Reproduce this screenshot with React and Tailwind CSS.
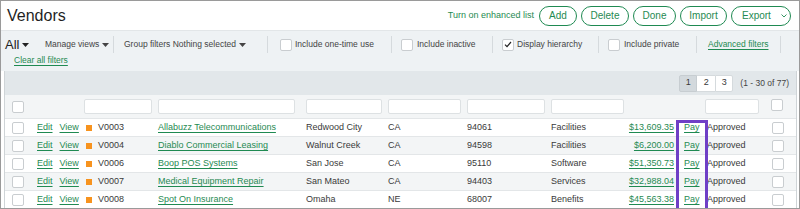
const rows = [
  { code: 'V0003', name: 'Allabuzz Telecommunications', city: 'Redwood City', state: 'CA', zip: '94061', cat: 'Facilities', amount: '$13,609.35' },
  { code: 'V0004', name: 'Diablo Commercial Leasing', city: 'Walnut Creek', state: 'CA', zip: '94598', cat: 'Facilities', amount: '$6,200.00' },
  { code: 'V0006', name: 'Boop POS Systems', city: 'San Jose', state: 'CA', zip: '95110', cat: 'Software', amount: '$51,350.73' },
  { code: 'V0007', name: 'Medical Equipment Repair', city: 'San Mateo', state: 'CA', zip: '94403', cat: 'Services', amount: '$32,988.04' },
  { code: 'V0008', name: 'Spot On Insurance', city: 'Omaha', state: 'NE', zip: '68007', cat: 'Benefits', amount: '$45,563.38' },
];

function Caret() {
  return (
    <svg width="7" height="4" viewBox="0 0 7 4" className="ml-[3px] inline-block">
      <path d="M0 0h7L3.5 4z" fill="currentColor" />
    </svg>
  );
}

function Box({ checked }) {
  return (
    <span className="inline-flex items-center justify-center w-[12px] h-[12px] bg-white border border-[#c9cdd0] rounded-[2px] shrink-0">
      {checked && (
        <svg width="8" height="7" viewBox="0 0 8 7">
          <path d="M1 3.6l2 2L7 1" fill="none" stroke="#222" strokeWidth="1.2" />
        </svg>
      )}
    </span>
  );
}

function Pill({ children, w }) {
  return (
    <button className={`${w} h-[20px] rounded-full border-[1.5px] border-[#1f8a52] text-[#1f8a52] text-[10px] flex items-center justify-center bg-white`}>
      {children}
    </button>
  );
}

function Field({ w }) {
  return <div className={`${w} h-[15px] bg-white border border-[#dde1e3] rounded-[2px]`} />;
}

export default function App() {
  return (
    <div className="relative w-[800px] h-[209px] overflow-hidden border border-[#9a9a9a] bg-white font-['Liberation_Sans',Arial,sans-serif] text-[#3a3a3a]">
      {/* title bar */}
      <div className="h-[29px] flex items-center justify-between pl-[6px] pr-[8px] bg-white">
        <div className="text-[16px] text-[#1f1f1f]">Vendors</div>
        <div className="flex items-center gap-[4px]">
          <span className="text-[9px] text-[#1f8a52] mr-[1px]">Turn on enhanced list</span>
          <Pill w="w-[38px]">Add</Pill>
          <Pill w="w-[48px]">Delete</Pill>
          <Pill w="w-[43px]">Done</Pill>
          <Pill w="w-[47px]">Import</Pill>
          <button className="w-[60px] h-[20px] rounded-full border-[1.5px] border-[#1f8a52] text-[#1f8a52] text-[10px] flex items-center pl-[10px] bg-white">
            Export
            <svg width="6" height="4" viewBox="0 0 6 4" className="ml-[10px]">
              <path d="M0.5 0.5l2.5 2.5 2.5-2.5" fill="none" stroke="#1f8a52" strokeWidth="0.9" />
            </svg>
          </button>
        </div>
      </div>

      {/* filters */}
      <div className="h-[41px] bg-[#eef2f4] border-t border-[#e2e6e8] pt-[5px]">
        <div className="flex items-center h-[17px] text-[8.5px] text-[#444]">
          <div className="w-[39px] pl-[4px] text-[13px] text-[#222] flex items-center">All<Caret /></div>
          <div className="w-[74px] h-[17px] pl-[5px] border-r border-[#d5dadd] flex items-center">Manage views<Caret /></div>
          <div className="w-[154px] h-[17px] pl-[10px] border-r border-[#d5dadd] flex items-center">Group filters Nothing selected<Caret /></div>
          <div className="w-[124px] h-[17px] pl-[12px] border-r border-[#d5dadd] flex items-center gap-[3px]"><Box />Include one-time use</div>
          <div className="w-[101px] h-[17px] pl-[9px] border-r border-[#d5dadd] flex items-center gap-[4px]"><Box />Include inactive</div>
          <div className="w-[106px] h-[17px] pl-[9px] border-r border-[#d5dadd] flex items-center gap-[3px]"><Box checked />Display hierarchy</div>
          <div className="w-[98px] h-[17px] pl-[9px] border-r border-[#d5dadd] flex items-center gap-[4px]"><Box />Include private</div>
          <div className="w-[84px] h-[17px] pl-[11px] border-r border-[#d5dadd] flex items-center">
            <span className="text-[#1f8a52] underline underline-offset-2">Advanced filters</span>
          </div>
        </div>
        <div className="pl-[13px] text-[8.5px] leading-[12px] mt-[1px]">
          <span className="text-[#1f8a52] underline underline-offset-2">Clear all filters</span>
        </div>
      </div>

      {/* list */}
      <div className="ml-[3px] mr-[2px] border-x border-[#cfd4d7]">
        <div className="h-[24px] bg-[#e2e7ea] flex items-center justify-end pr-[7px]">
          <div className="flex h-[17px] text-[9px]">
            <span className="w-[18px] flex items-center justify-center bg-[#d3d9dd] border border-[#c7cdd1] rounded-l-[2px]">1</span>
            <span className="w-[18px] flex items-center justify-center bg-white border-y border-[#d5dadd]">2</span>
            <span className="w-[18px] flex items-center justify-center bg-white border border-[#d5dadd] rounded-r-[2px]">3</span>
          </div>
          <span className="ml-[7px] text-[8.5px] text-[#444]">(1 - 30 of 77)</span>
        </div>

        {/* column filter row */}
        <div className="h-[24px] bg-[#f3f5f6] flex items-center border-b border-[#e3e6e8]">
          <div className="w-[25px] pl-[7px] flex"><Box /></div>
          <div className="w-[54px]" />
          <div className="w-[74px]"><Field w="w-[68px]" /></div>
          <div className="w-[148px]"><Field w="w-[137px]" /></div>
          <div className="w-[82px]"><Field w="w-[76px]" /></div>
          <div className="w-[79px]"><Field w="w-[73px]" /></div>
          <div className="w-[84px]"><Field w="w-[78px]" /></div>
          <div className="w-[73px]"><Field w="w-[73px]" /></div>
          <div className="w-[81px]" />
          <div className="w-[65px]"><Field w="w-[54px]" /></div>
          <div className="pl-[1px] -mt-[4px] flex"><Box /></div>
        </div>

        {rows.map((r, i) => (
          <div
            key={r.code}
            className={`h-[18px] flex items-center border-b border-[#e3e6e8] text-[9px] ${i % 2 ? 'bg-[#f3f5f6]' : 'bg-white'}`}
          >
            <div className="w-[25px] pl-[7px] flex"><Box /></div>
            <div className="w-[54px] pl-[7px] flex gap-[7px] text-[#1f8a52]">
              <span className="underline underline-offset-2">Edit</span>
              <span className="underline underline-offset-2">View</span>
            </div>
            <div className="w-[74px] flex items-center pl-[2px]">
              <span className="w-[6px] h-[6px] bg-[#f7931e] mr-[6px]" />
              {r.code}
            </div>
            <div className="w-[148px] text-[#1f8a52]"><span className="underline underline-offset-2">{r.name}</span></div>
            <div className="w-[82px]">{r.city}</div>
            <div className="w-[79px]">{r.state}</div>
            <div className="w-[84px]">{r.zip}</div>
            <div className="w-[73px]">{r.cat}</div>
            <div className="w-[50px] text-right text-[#1f8a52]"><span className="underline underline-offset-2">{r.amount}</span></div>
            <div className="w-[31px] pl-[10px] text-[#1f8a52]"><span className="underline underline-offset-2">Pay</span></div>
            <div className="w-[65px] pl-[2px]">Approved</div>
            <div className="pl-[2px] flex"><Box /></div>
          </div>
        ))}
      </div>

      {/* highlight over the Pay column */}
      <div className="absolute left-[675px] top-[119px] w-[32px] h-[100px] border-[3px] border-[#6f3fc6]" />
    </div>
  );
}
